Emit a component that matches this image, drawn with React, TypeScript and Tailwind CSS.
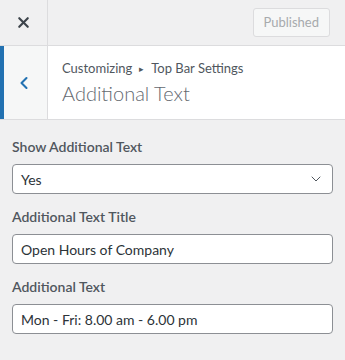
import { ChevronDown, ChevronLeft, X } from "lucide-react";

function Field({ label, children }: { label: string; children: React.ReactNode }) {
  return (
    <div className="flex flex-col gap-[7px]">
      <span className="text-[14px] font-semibold leading-[20px] text-[#50575e]">{label}</span>
      {children}
    </div>
  );
}

function TextBox({ value }: { value: string }) {
  return (
    <div className="flex h-[30px] items-center rounded-[4px] border border-[#8c8f94] bg-white px-[8px] text-[14px] text-[#2c3338]">
      {value}
    </div>
  );
}

export default function App() {
  return (
    <div className="h-[360px] w-[345px] bg-[#f0f0f1] font-['Segoe_UI','Lato',sans-serif]">
      <header className="flex h-[46px] border-b border-[#dcdcde] bg-[#f0f0f1]">
        <div className="flex w-[48px] items-center justify-center border-r border-[#dcdcde]">
          <X size={17} strokeWidth={3} className="text-[#3c434a]" />
        </div>
        <div className="flex flex-1 items-center justify-end pr-[15px]">
          <div className="flex h-[29px] items-center rounded-[3px] border border-[#dcdcde] bg-[#f6f7f7] px-[10px] text-[13px] text-[#a7aaad]">
            Published
          </div>
        </div>
      </header>

      <section className="flex h-[74px] border-b border-[#dcdcde] bg-white">
        <div className="flex w-[48px] items-center justify-center border-l-4 border-r border-l-[#2271b1] border-r-[#dcdcde] bg-[#f6f7f7]">
          <ChevronLeft size={20} strokeWidth={2.5} className="-ml-[4px] text-[#2271b1]" />
        </div>
        <div className="flex flex-col justify-center pl-[14px] pt-[2px]">
          <span className="text-[13px] leading-[18px] text-[#50575e]">
            Customizing<span className="mx-[7px] align-[1px] text-[9px]">▸</span>Top Bar Settings
          </span>
          <span className="text-[20px] font-light leading-[30px] text-[#646970]">Additional Text</span>
        </div>
      </section>

      <div className="flex flex-col gap-[13px] px-[12px] pt-[17px]">
        <Field label="Show Additional Text">
          <div className="flex h-[30px] items-center justify-between rounded-[4px] border border-[#8c8f94] bg-white px-[8px] text-[14px] text-[#2c3338]">
            Yes
            <ChevronDown size={16} strokeWidth={1.5} className="text-[#50575e]" />
          </div>
        </Field>
        <Field label="Additional Text Title">
          <TextBox value="Open Hours of Company" />
        </Field>
        <Field label="Additional Text">
          <TextBox value="Mon - Fri: 8.00 am - 6.00 pm" />
        </Field>
      </div>
    </div>
  );
}
